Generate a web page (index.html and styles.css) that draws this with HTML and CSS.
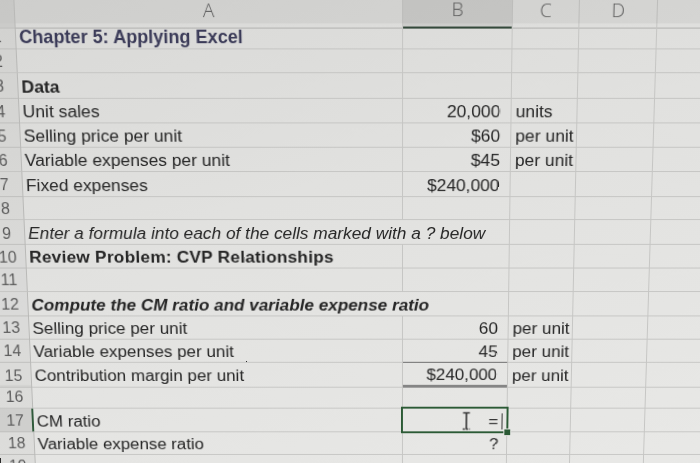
FILE: index.html
```html
<!DOCTYPE html>
<html>
<head>
<meta charset="utf-8">
<link rel="stylesheet" href="styles.css">
</head>
<body>
<div class="sheet">
  <div class="row hdr">
    <div class="c rh corner"></div>
    <div class="c ch">A</div>
    <div class="c ch chsel">B</div>
    <div class="c ch">C</div>
    <div class="c ch">D</div>
    <div class="c ch"></div>
  </div>
  <div class="row">
    <div class="c rh">1</div>
    <div class="c title">Chapter 5: Applying Excel</div>
    <div class="c"></div><div class="c"></div><div class="c"></div><div class="c"></div>
  </div>
  <div class="row">
    <div class="c rh">2</div>
    <div class="c"></div><div class="c"></div><div class="c"></div><div class="c"></div><div class="c"></div>
  </div>
  <div class="row">
    <div class="c rh">3</div>
    <div class="c b">Data</div>
    <div class="c"></div><div class="c"></div><div class="c"></div><div class="c"></div>
  </div>
  <div class="row">
    <div class="c rh">4</div>
    <div class="c">Unit sales</div>
    <div class="c num">20,000</div>
    <div class="c unit">units</div>
    <div class="c"></div><div class="c"></div>
  </div>
  <div class="row">
    <div class="c rh">5</div>
    <div class="c">Selling price per unit</div>
    <div class="c num">$60</div>
    <div class="c unit">per unit</div>
    <div class="c"></div><div class="c"></div>
  </div>
  <div class="row">
    <div class="c rh">6</div>
    <div class="c">Variable expenses per unit</div>
    <div class="c num">$45</div>
    <div class="c unit">per unit</div>
    <div class="c"></div><div class="c"></div>
  </div>
  <div class="row">
    <div class="c rh">7</div>
    <div class="c">Fixed expenses</div>
    <div class="c num">$240,000</div>
    <div class="c"></div><div class="c"></div><div class="c"></div>
  </div>
  <div class="row">
    <div class="c rh">8</div>
    <div class="c"></div><div class="c"></div><div class="c"></div><div class="c"></div><div class="c"></div>
  </div>
  <div class="row">
    <div class="c rh">9</div>
    <div class="c span2 i">Enter a formula into each of the cells marked with a ? below</div>
    <div class="c"></div><div class="c"></div><div class="c"></div>
  </div>
  <div class="row">
    <div class="c rh">10</div>
    <div class="c b wide">Review Problem: CVP Relationships</div>
    <div class="c"></div><div class="c"></div><div class="c"></div><div class="c"></div>
  </div>
  <div class="row">
    <div class="c rh">11</div>
    <div class="c"></div><div class="c"></div><div class="c"></div><div class="c"></div><div class="c"></div>
  </div>
  <div class="row">
    <div class="c rh">12</div>
    <div class="c span2 b i">Compute the CM ratio and variable expense ratio</div>
    <div class="c"></div><div class="c"></div><div class="c"></div>
  </div>
  <div class="row">
    <div class="c rh">13</div>
    <div class="c">Selling price per unit</div>
    <div class="c num">60</div>
    <div class="c unit">per unit</div>
    <div class="c"></div><div class="c"></div>
  </div>
  <div class="row">
    <div class="c rh">14</div>
    <div class="c">Variable expenses per unit</div>
    <div class="c num line-thin">45</div>
    <div class="c unit">per unit</div>
    <div class="c"></div><div class="c"></div>
  </div>
  <div class="row">
    <div class="c rh">15</div>
    <div class="c">Contribution margin per unit</div>
    <div class="c num line-thick">$240,000</div>
    <div class="c unit">per unit</div>
    <div class="c"></div><div class="c"></div>
  </div>
  <div class="row">
    <div class="c rh">16</div>
    <div class="c"></div><div class="c"></div><div class="c"></div><div class="c"></div><div class="c"></div>
  </div>
  <div class="row">
    <div class="c rh rhsel">17</div>
    <div class="c">CM ratio</div>
    <div class="c active">
      <span class="eq">=</span><span class="caret"></span>
      <span class="selbox"><span class="handle"></span></span>
      <svg class="ibeam" width="10" height="20" viewBox="0 0 10 20">
        <path d="M1.5 1.5h7M5 1.5v17" stroke="#2f2f2f" stroke-width="1.6" fill="none"/>
        <path d="M1.5 18.6h7" stroke="#2f2f2f" stroke-width="1.8" stroke-dasharray="2 1.2" fill="none"/>
      </svg>
    </div>
    <div class="c"></div><div class="c"></div><div class="c"></div>
  </div>
  <div class="row">
    <div class="c rh">18</div>
    <div class="c">Variable expense ratio</div>
    <div class="c num q">?</div>
    <div class="c"></div><div class="c"></div><div class="c"></div>
  </div>
  <div class="row">
    <div class="c rh">19</div>
    <div class="c"></div><div class="c"></div><div class="c"></div><div class="c"></div><div class="c"></div>
  </div>
</div>
</body>
</html>
```

FILE: styles.css
```css
html, body {
  margin: 0;
  padding: 0;
  overflow: hidden;
  width: 700px;
  height: 463px;
  background: #2b2b2b;
}

.sheet {
  width: 780px;
  margin-left: -11px;
  background: linear-gradient(165deg, #d8d8d6 0%, #e1e1df 40%, #e9e9e7 100%);
  transform-origin: 411px 230px;
  transform: perspective(1000px) rotateX(-7deg);
  font-family: "Liberation Sans", Arial, sans-serif;
  font-size: 17.3px;
  color: #262626;
}

.row {
  display: grid;
  grid-template-columns: 36px 378px 107px 65px 76px 118px;
  height: 24.2px;
}

.row.hdr {
  height: 26.5px;
  background: rgba(0, 0, 0, 0.045);
}

.c {
  box-sizing: border-box;
  border-right: 1px solid #c6c6c4;
  border-bottom: 1px solid #c6c6c4;
  display: flex;
  align-items: center;
  padding: 3px 3px 0 3px;
  white-space: nowrap;
  min-width: 0;
}

.span2 {
  grid-column: span 2;
}

.b { font-weight: bold; }
.i { font-style: italic; }
.wide { letter-spacing: 0.25px; }

.title {
  font-weight: bold;
  font-size: 17.7px;
  color: #3b3b58;
}

.num {
  justify-content: flex-end;
  padding-right: 10px;
}

.unit {
  padding-left: 4px;
}

.q {
  padding-right: 8px;
  color: #333;
}

.line-thin {
  border-bottom: 1px solid #6a6a6a;
}

.line-thick {
  border-bottom: 3px solid #858585;
}

.rh {
  justify-content: center;
  padding: 3px 0 0 0;
  font-size: 16px;
  color: #5c5c5c;
  border-right: 1px solid #b9b9b7;
  background: rgba(0, 0, 0, 0.03);
}

.rhsel {
  background: rgba(0, 0, 0, 0.09);
  border-right: 2px solid #2f5a3a;
}

.ch {
  justify-content: center;
  padding: 0 0 5px 0;
  font-family: "Open Sans", "Liberation Sans", sans-serif;
  font-weight: 300;
  font-size: 18.5px;
  color: #5a5a5a;
  border-right: 1px solid #bdbdbb;
  border-bottom: 1px solid #b3b3b1;
}

.chsel {
  background: rgba(0, 0, 0, 0.07);
  border-bottom: 2px solid #34493b;
}

.active {
  position: relative;
  justify-content: flex-end;
  padding-right: 4px;
  color: #333;
}

.eq {
  margin-right: 3px;
}

.caret {
  display: inline-block;
  width: 1.5px;
  height: 17px;
  background: #333;
}

.selbox {
  position: absolute;
  left: -2px;
  top: -2px;
  right: -2px;
  bottom: -2px;
  border: 2px solid #2b5a35;
}

.handle {
  position: absolute;
  right: -5px;
  bottom: -5px;
  width: 6px;
  height: 6px;
  background: #2b5a35;
  border: 1px solid #e6e6e4;
}

.ibeam {
  position: absolute;
  left: 60px;
  top: 3px;
}
```
